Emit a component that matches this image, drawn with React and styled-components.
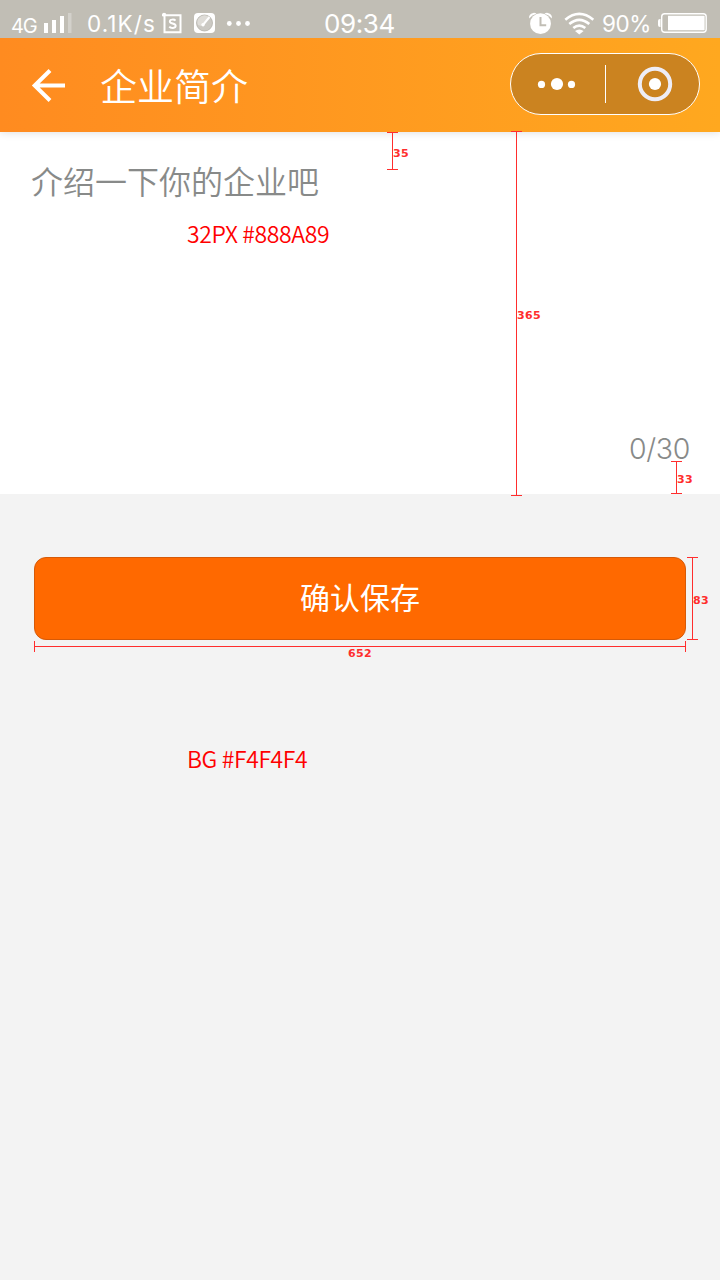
import React from 'react';
import styled, { createGlobalStyle } from 'styled-components';

const GlobalStyle = createGlobalStyle`
  * { box-sizing: border-box; }
  body { margin: 0; background: #f3f3f3; }
`;

const CJK = '"Noto Sans CJK SC", sans-serif';

const Page = styled.main`
  position: relative;
  display: flex;
  flex-direction: column;
  width: 720px;
  height: 1280px;
  overflow: hidden;
  background: #f3f3f3;
  font-family: ${CJK};
`;

const StatusBar = styled.div`
  position: relative;
  z-index: 1;
  display: grid;
  grid-template-columns: 300px 120px 300px;
  height: 38px;
  background: #c1beb5;
  color: #fff;
`;

const StatusGroup = styled.div`
  display: flex;
  height: 38px;
  padding-left: ${(p) => p.$start || 0}px;
`;

const StatusText = styled.span`
  flex: none;
  width: ${(p) => p.$width}px;
  padding-top: ${(p) => p.$top}px;
  font: 400 ${(p) => p.$size}px/30px Inter, sans-serif;
  letter-spacing: ${(p) => p.$spacing || 0}px;
  white-space: nowrap;
`;

const Glyph = styled.svg`
  display: block;
  flex: none;
`;

const Header = styled.header`
  position: relative;
  display: flex;
  align-items: center;
  height: 94px;
  padding: 0 20px 0 30px;
  background: linear-gradient(90deg, #ff8b20, #ffa81f);
  box-shadow: 0 1px 8px rgba(0, 0, 0, 0.12);
`;

const BackButton = styled.button`
  display: flex;
  width: 38px;
  padding: 0;
  border: 0;
  background: none;
`;

const Title = styled.h1`
  margin: 0 auto 1px 32px;
  color: #fff;
  font: 350 37px/54px ${CJK};
`;

const Capsule = styled.div`
  display: flex;
  align-items: center;
  width: 190px;
  height: 62px;
  margin-top: -2px;
  border: 1px solid #fff;
  border-radius: 31px;
  background: #cb8320;
`;

const CapsuleHalf = styled.div`
  display: flex;
  flex: ${(p) => p.$width}px 0 0;
  padding-left: ${(p) => p.$start}px;
`;

const Divider = styled.div`
  width: 1px;
  height: 38px;
  background: #fff;
`;

const Editor = styled.section`
  display: flex;
  flex-direction: column;
  justify-content: space-between;
  height: 362px;
  padding: 25px 30px 25px 31px;
  background: #fff;
`;

const Placeholder = styled.p`
  margin: 0;
  color: #888a89;
  font: 350 32px/46px ${CJK};
`;

const Counter = styled.span`
  align-self: flex-end;
  color: #888a89;
  font: 300 28.5px/40px Inter, sans-serif;
  letter-spacing: -0.35px;
`;

const SaveButton = styled.button`
  width: 652px;
  height: 83px;
  margin: 63px 34px 0;
  padding: 0 0 5px;
  border: 1px solid #d65a08;
  border-radius: 12px;
  background: #ff6900;
  color: #fff;
  font: 400 30px/44px ${CJK};
`;

const Note = styled.span`
  position: absolute;
  left: 187px;
  top: ${(p) => p.$top}px;
  color: #ff0000;
  font: 350 23px/34px ${CJK};
  letter-spacing: -0.38px;
  white-space: nowrap;
`;

const Measure = styled.div`
  position: absolute;
  left: ${(p) => p.$x}px;
  top: ${(p) => p.$y}px;
  width: ${(p) => (p.$horizontal ? p.$length : 11)}px;
  height: ${(p) => (p.$horizontal ? 11 : p.$length)}px;
  border: 0 solid #ff2d2d;
  border-width: ${(p) => (p.$horizontal ? '0 1px' : '1px 0')};

  &::before {
    content: '';
    position: absolute;
    background: #ff2d2d;
    ${(p) =>
      p.$horizontal
        ? 'left: 0; right: 0; top: 5px; height: 1px;'
        : 'top: 0; bottom: 0; left: 5px; width: 1px;'}
  }
`;

const MeasureValue = styled.span`
  position: absolute;
  left: ${(p) => p.$x}px;
  top: ${(p) => p.$y}px;
  color: #ff2d2d;
  font: 700 11px/12px "DejaVu Sans", sans-serif;
  letter-spacing: 0.4px;
`;

function Dimension({ x, y, length, horizontal, value, labelX, labelY }) {
  return (
    <Measure $x={x} $y={y} $length={length} $horizontal={horizontal}>
      <MeasureValue $x={labelX} $y={labelY}>{value}</MeasureValue>
    </Measure>
  );
}

function SignalAndApps() {
  return (
    <StatusGroup $start={11}>
      <StatusText $width={32} $top={11} $size={20} $spacing={-1.2}>4G</StatusText>
      <Glyph width="44" height="38" viewBox="43 0 44 38" fill="#fff">
        <path d="M44 23h4v10h-4zM52 20h4v13h-4zM60 16h4v17h-4z" />
        <path d="M68 13h3.5v20H68z" opacity=".3" />
      </Glyph>
      <StatusText $width={75} $top={9} $size={22.5} $spacing={1.1}>0.1K/s</StatusText>
      <Glyph width="92" height="38" viewBox="162 0 92 38" fill="none" stroke="#fff">
        <path d="M162 15.2h18.5v17h-16V13" strokeWidth="2" />
        <circle cx="164" cy="14.6" r="1.9" fill="#fff" stroke="none" />
        <path d="M175.5 20.6c-1.2-1.5-5.7-1.5-5.7.9 0 2.6 5.9 1.4 5.9 4.3 0 2.8-5 2.7-6.4.9" strokeWidth="1.9" />
        <rect x="194" y="13" width="21" height="20" rx="4" fill="#fff" stroke="none" />
        <circle cx="204.5" cy="23" r="8" fill="#cbc9c3" stroke="#b4b1aa" strokeWidth=".8" />
        <path d="M198 25a7 7 0 0 1 11-8l-8 9z" fill="#dedcd7" stroke="none" />
        <path d="M202.5 25.5l7-8.5" strokeWidth="2" />
        <circle cx="203" cy="24.7" r="1.7" fill="#fff" stroke="none" />
        <g fill="#fff" stroke="none">
          <circle cx="229.3" cy="23.5" r="2.4" />
          <circle cx="238.5" cy="23.5" r="2.4" />
          <circle cx="247.5" cy="23.5" r="2.4" />
        </g>
      </Glyph>
    </StatusGroup>
  );
}

function DeviceStatus() {
  return (
    <StatusGroup $start={107}>
      <Glyph width="75" height="38" viewBox="527 0 75 38" fill="none" stroke="#fff">
        <circle cx="540.5" cy="23.7" r="10.4" fill="#fff" stroke="none" />
        <path d="M529.2 18.4q-.8-4.5 4-5.5 2-.3 3.3.9-4.7 1-7.3 4.6zM551.8 18.4q.8-4.5-4-5.5-2-.3-3.3.9 4.7 1 7.3 4.6z" fill="#fff" stroke="none" />
        <path d="M540.5 17v8.3h5.7" stroke="#c1beb5" strokeWidth="2" />
        <path d="M565.3 19.7q14-11.6 28 0M569.3 24q10-8.4 20 0M573.3 28.1q6-5 12 0" strokeWidth="2.6" />
        <path d="M575 30.9q4.3-3 8.6 0l-4.3 3.7z" fill="#fff" stroke="none" />
      </Glyph>
      <StatusText $width={56} $top={9} $size={22.5} $spacing={-0.4}>90%</StatusText>
      <Glyph width="50" height="38" viewBox="658 0 50 38" fill="none">
        <rect x="661.7" y="13.7" width="44.5" height="18.6" rx="3" stroke="#fff" strokeWidth="1.4" />
        <path d="M668 15.8h36.6v14.4H668z" fill="#fff" />
        <path d="M660.5 19H660q-2 0-2 2v4q0 2 2 2h.5z" fill="#fff" />
      </Glyph>
    </StatusGroup>
  );
}

export default function App() {
  return (
    <>
      <GlobalStyle />
      <Page>
        <StatusBar>
          <SignalAndApps />
          <StatusGroup $start={24}>
            <StatusText $width={80} $top={9} $size={26} $spacing={-0.4}>09:34</StatusText>
          </StatusGroup>
          <DeviceStatus />
        </StatusBar>

        <Header>
          <BackButton aria-label="返回">
            <Glyph width="38" height="38" viewBox="0 0 38 38" fill="none" stroke="#fff" strokeWidth="4">
              <path d="M20 4.5L4.7 19.5 20 34.5M4.5 19.5H35" />
            </Glyph>
          </BackButton>
          <Title>企业简介</Title>
          <Capsule>
            <CapsuleHalf $width={94} $start={26}>
              <Glyph width="40" height="16" fill="#fff">
                <circle cx="4.5" cy="8.4" r="3.6" />
                <circle cx="20" cy="8" r="6.1" />
                <circle cx="34.5" cy="8.4" r="3.6" />
              </Glyph>
            </CapsuleHalf>
            <Divider />
            <CapsuleHalf $width={93} $start={31}>
              <Glyph width="36" height="36" fill="none">
                <circle cx="18" cy="18" r="15.2" stroke="#eeedf6" strokeWidth="4" />
                <circle cx="18" cy="18" r="6.1" fill="#fff" />
              </Glyph>
            </CapsuleHalf>
          </Capsule>
        </Header>

        <Editor>
          <Placeholder>介绍一下你的企业吧</Placeholder>
          <Counter>0/30</Counter>
        </Editor>
        <SaveButton>确认保存</SaveButton>

        <Note $top={216}>32PX #888A89</Note>
        <Note $top={741}>BG #F4F4F4</Note>
        <Dimension x={387} y={132} length={38} value="35" labelX={6} labelY={15} />
        <Dimension x={511} y={131} length={365} value="365" labelX={6} labelY={178} />
        <Dimension x={671} y={461} length={33} value="33" labelX={6} labelY={12} />
        <Dimension x={687} y={557} length={83} value="83" labelX={6} labelY={37} />
        <Dimension x={34} y={641} length={652} horizontal value="652" labelX={313} labelY={7} />
      </Page>
    </>
  );
}
